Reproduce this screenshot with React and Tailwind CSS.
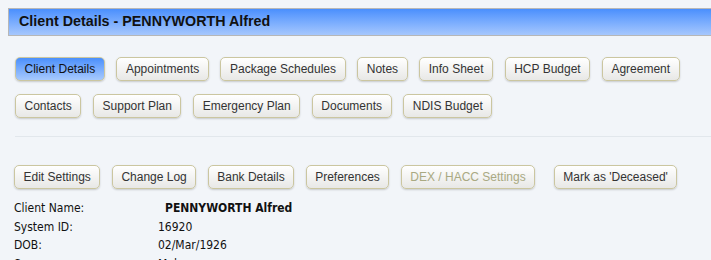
import React from "react";

const btnBase =
  "h-[24px] px-[8.5px] border border-[#cbc6a0] rounded-[5px] shadow-[0_1px_2px_rgba(0,0,0,0.18)] text-[12px] leading-none flex items-center whitespace-nowrap";

function Btn({ children, active, disabled }) {
  const tone = active
    ? "bg-gradient-to-b from-[#4a8ffb] to-[#a7c9fd] text-[#111]"
    : disabled
    ? "bg-gradient-to-b from-white to-[#e8e8e6] text-[#a9a982]"
    : "bg-gradient-to-b from-white to-[#e8e8e6] text-[#333]";
  return <div className={`${btnBase} ${tone}`}>{children}</div>;
}

const rows = [
  ["Client Name:", "PENNYWORTH Alfred", true],
  ["System ID:", "16920"],
  ["DOB:", "02/Mar/1926"],
  ["Sex:", "Male"],
];

export default function App() {
  return (
    <div
      className="w-[711px] h-[260px] overflow-hidden bg-[#f2f5f9]"
      style={{ fontFamily: '"Liberation Sans", Arial, sans-serif' }}
    >
      <div className="pt-[8px] pl-[8px]">
        <div className="h-[28px] border border-r-0 border-[#b7b7b7] bg-gradient-to-b from-[#4a8ffd] to-[#a6c7fd] flex items-center pl-[10px]">
          <span className="text-[14.3px] font-bold text-[#111]">
            Client Details - PENNYWORTH Alfred
          </span>
        </div>
      </div>

      <div className="pl-[15px] pt-[21px] flex flex-col gap-[13px]">
        <div className="flex gap-[11.7px]">
          <Btn active>Client Details</Btn>
          <Btn>Appointments</Btn>
          <Btn>Package Schedules</Btn>
          <Btn>Notes</Btn>
          <Btn>Info Sheet</Btn>
          <Btn>HCP Budget</Btn>
          <Btn>Agreement</Btn>
        </div>
        <div className="flex gap-[11.7px]">
          <Btn>Contacts</Btn>
          <Btn>Support Plan</Btn>
          <Btn>Emergency Plan</Btn>
          <Btn>Documents</Btn>
          <Btn>NDIS Budget</Btn>
        </div>
      </div>

      <div className="ml-[15px] mt-[18px] h-px bg-[#e2e7ec]" />

      <div className="pl-[14px] pt-[28px] flex gap-[11.5px]">
        <Btn>Edit Settings</Btn>
        <Btn>Change Log</Btn>
        <Btn>Bank Details</Btn>
        <Btn>Preferences</Btn>
        <Btn disabled>DEX / HACC Settings</Btn>
        <div className="ml-[7px]">
          <Btn>Mark as 'Deceased'</Btn>
        </div>
      </div>

      <div
        className="pl-[14px] pt-[10px] text-[12px] text-[#111]"
        style={{ fontFamily: '"DejaVu Sans Condensed", "DejaVu Sans", sans-serif' }}
      >
        {rows.map(([k, v, b]) => (
          <div key={k} className="flex leading-[18.5px] h-[18.5px]">
            <div className="w-[144px]">{k}</div>
            <div className={b ? "font-bold pl-[7px]" : ""}>{v}</div>
          </div>
        ))}
      </div>
    </div>
  );
}
